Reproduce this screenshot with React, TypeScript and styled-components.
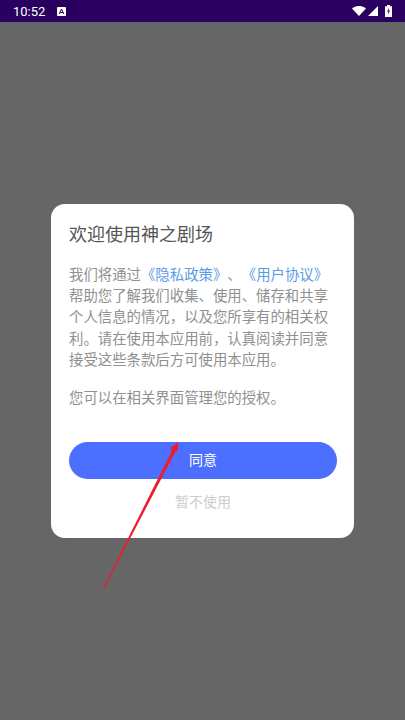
import React, {FC} from 'react';
import styled, {createGlobalStyle} from 'styled-components';

const GlobalStyle = createGlobalStyle`
  html, body {
    margin: 0;
    padding: 0;
  }

  body {
    background: #666;
    font-family: "Noto Sans CJK SC", "Roboto", sans-serif;
    text-spacing-trim: space-all;
  }
`;

const Screen = styled.div`
  background: #666;
  display: flex;
  flex-direction: column;
  height: 720px;
  overflow: hidden;
  position: relative;
  width: 405px;
`;

const StatusBar = styled.div`
  align-items: center;
  background: #290060;
  box-sizing: border-box;
  color: #fff;
  display: flex;
  flex: none;
  height: 22px;
  padding: 0 13px;
`;

const Clock = styled.span`
  font-family: "Roboto", sans-serif;
  font-size: 13px;
  width: 44px;
`;

const StatusRight = styled.div`
  align-items: center;
  display: flex;
  margin-left: auto;
`;

const SignalIcon = styled.svg`
  margin: 0 7px 0 2px;
`;

const Overlay = styled.div`
  display: flex;
  flex: 1;
  justify-content: center;
  padding-top: 182px;
`;

const Dialog = styled.div`
  background: #fff;
  border-radius: 14px;
  box-sizing: border-box;
  height: 334px;
  padding: 16px 18px 0;
  width: 303px;
`;

const Title = styled.h1`
  color: #555;
  font-size: 18px;
  font-weight: 400;
  line-height: 26px;
  margin: 0 0 17px;
`;

const Paragraph = styled.p`
  color: #909090;
  font-size: 14.4px;
  line-height: 21.2px;
  margin: 0 0 17px;
  width: 262px;
`;

const DocLink = styled.a`
  color: #5a9be6;
  text-decoration: none;
`;

const AgreeButton = styled.button`
  background: #4d6fff;
  border: none;
  border-radius: 19px;
  color: #fff;
  display: block;
  font-family: inherit;
  font-size: 14px;
  height: 37px;
  line-height: 35px;
  margin-top: 35px;
  padding: 0 0 2px;
  width: 268px;
`;

const DeclineButton = styled.button`
  background: none;
  border: none;
  color: #ccc;
  display: block;
  font-family: inherit;
  font-size: 14px;
  height: 20px;
  line-height: 20px;
  margin-top: 12px;
  padding: 0;
  width: 268px;
`;

const ArrowOverlay = styled.svg`
  left: 0;
  pointer-events: none;
  position: absolute;
  top: 0;
`;

const App: FC = () => (
  <Screen>
    <GlobalStyle />
    <StatusBar>
      <Clock>10:52</Clock>
      <svg width="9" height="9" viewBox="0 0 9 9">
        <rect width="9" height="9" rx="1" fill="#fff" />
        <path d="M2.200 7 4.500 2 6.800 7M3 5.500h3" fill="none" stroke="#290060" strokeWidth="1" />
      </svg>
      <StatusRight>
        <svg width="14" height="10" viewBox="0 0 14 10">
          <path d="M0 2.600C4-.9 10-.9 14 2.600L7 10Z" fill="#fff" />
        </svg>
        <SignalIcon width="10" height="10" viewBox="0 0 10 10">
          <path d="M10 0V10H0Z" fill="#fff" />
        </SignalIcon>
        <svg width="7" height="12" viewBox="0 0 7 12">
          <path d="M2 0H5V1.200H7V12H0V1.200H2Z" fill="#fff" />
          <path d="M4 2.800 2 6.500H3.400L3 9.800 5 5.500H3.600Z" fill="#290060" />
        </svg>
      </StatusRight>
    </StatusBar>
    <Overlay>
      <Dialog>
        <Title>欢迎使用神之剧场</Title>
        <Paragraph>
          我们将通过<DocLink>《隐私政策》</DocLink>、<DocLink>《用户协议》</DocLink>帮助您了解我们收集、使用、储存和共享个人信息的情况，以及您所享有的相关权利。请在使用本应用前，认真阅读并同意接受这些条款后方可使用本应用。
        </Paragraph>
        <Paragraph>您可以在相关界面管理您的授权。</Paragraph>
        <AgreeButton>同意</AgreeButton>
        <DeclineButton>暂不使用</DeclineButton>
      </Dialog>
    </Overlay>
    <ArrowOverlay width="405" height="720" viewBox="0 0 405 720">
      <path d="M102.500 589 171.600 451.500 170.800 447.800 178.300 442 177.800 450.500 175.500 451.500 103.500 589.500Z" fill="#ee1c2e" />
    </ArrowOverlay>
  </Screen>
);

export default App;
